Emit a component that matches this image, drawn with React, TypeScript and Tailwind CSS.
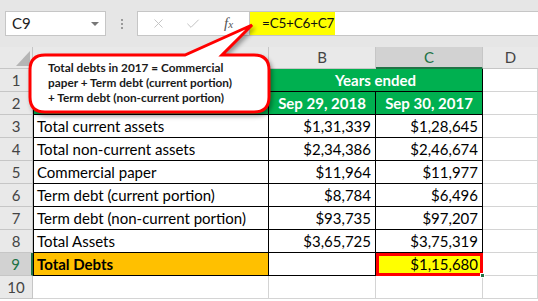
import { Check, X } from "lucide-react";

type Row = {
  n: number;
  label: string;
  b: string;
  c: string;
};

const rows: Row[] = [
  { n: 3, label: "Total current assets", b: "$1,31,339", c: "$1,28,645" },
  { n: 4, label: "Total non-current assets", b: "$2,34,386", c: "$2,46,674" },
  { n: 5, label: "Commercial paper", b: "$11,964", c: "$11,977" },
  { n: 6, label: "Term debt (current portion)", b: "$8,784", c: "$6,496" },
  { n: 7, label: "Term debt (non-current portion)", b: "$93,735", c: "$97,207" },
  { n: 8, label: "Total Assets", b: "$3,65,725", c: "$3,75,319" },
];

const rowHead = "flex items-center justify-center bg-[#e9e9e9] border-r border-b border-[#c6c6c6] text-[#444]";
const cell = "border-r border-b border-black flex items-center";
const grid = "border-r border-b border-[#d4d4d4]";

function FormulaBar() {
  return (
    <div className="h-[47px] bg-[#e6e6e6] pt-[11px]">
      <div className="flex h-[25px] items-stretch">
        <div className="ml-[5px] w-[101px] bg-white border border-[#c6c6c6] flex items-center justify-between pl-[6px] pr-[6px]">
          <span className="text-[15px] text-[#222]">C9</span>
          <span className="w-0 h-0 border-l-[4px] border-r-[4px] border-t-[4px] border-l-transparent border-r-transparent border-t-[#777]" />
        </div>
        <div className="w-[31px] flex flex-col items-center justify-center gap-[2px]">
          <span className="w-[2px] h-[2px] bg-[#9a9a9a]" />
          <span className="w-[2px] h-[2px] bg-[#9a9a9a]" />
          <span className="w-[2px] h-[2px] bg-[#9a9a9a]" />
        </div>
        <div className="w-[113px] bg-white border border-[#c6c6c6] flex items-center pl-[13px] gap-[19px]">
          <X size={15} strokeWidth={1.5} className="text-[#c2c2c2]" />
          <Check size={16} strokeWidth={1.5} className="text-[#c2c2c2]" />
          <span className="font-['Liberation_Serif',serif] italic text-[15px] text-[#555] ml-[4px]">
            f<span className="text-[11px]">x</span>
          </span>
        </div>
        <div className="flex-1 bg-white border-y border-[#c6c6c6] flex items-stretch">
          <div className="w-[85px] bg-[#ffff00] flex items-center pl-[12px] text-[13.5px] tracking-[-0.2px] text-[#111]">
            =C5+C6+C7
          </div>
        </div>
      </div>
    </div>
  );
}

function Callout() {
  return (
    <>
      <svg
        width={538}
        height={301}
        className="absolute left-0 top-0 pointer-events-none drop-shadow-[2px_3px_2px_rgba(0,0,0,0.35)]"
      >
        <path
          d="M45 55 L185 55 L252 25 L222 55 L254 55 Q269 55 269 70 L269 97 Q269 112 254 112 L45 112 Q30 112 30 97 L30 70 Q30 55 45 55 Z"
          fill="#ffffff"
          stroke="#ff0000"
          strokeWidth={3}
          strokeLinejoin="miter"
        />
      </svg>
      <div className="absolute left-[48px] top-[60px] text-[11.8px] leading-[15px] font-bold text-[#1a1a1a] whitespace-nowrap">
        <div>Total debts in 2017 = Commercial</div>
        <div>paper + Term debt (current portion)</div>
        <div>+ Term debt (non-current portion)</div>
      </div>
    </>
  );
}

export default function App() {
  return (
    <div className="relative w-[538px] h-[301px] overflow-hidden bg-white font-['Lato',sans-serif]">
      <FormulaBar />
      <div className="grid grid-cols-[33px_236px_107px_107px_1fr] grid-rows-[22px_repeat(10,23px)] text-[15px]">
        {/* column headers */}
        <div className="relative bg-[#e9e9e9] border-r border-b border-[#c6c6c6]">
          <svg width={14} height={15} className="absolute right-[2px] bottom-[2px]">
            <path d="M14 0 L14 15 L0 15 Z" fill="#b5b5b5" />
          </svg>
        </div>
        <div className="bg-[#e9e9e9] border-r border-b border-[#c6c6c6]" />
        <div className="bg-[#e9e9e9] border-r border-b border-[#c6c6c6] flex items-center justify-center text-[#444]">B</div>
        <div className="bg-[#d2d2d2] border-r border-[#c6c6c6] border-b-2 border-b-[#217346] flex items-center justify-center text-[#217346]">C</div>
        <div className="bg-[#e9e9e9] border-b border-[#c6c6c6] flex items-center justify-center text-[#444]">D</div>

        {/* row 1 */}
        <div className={rowHead}>1</div>
        <div className="row-span-2 bg-[#00b050] border-l border-r border-b border-black" />
        <div className="col-span-2 bg-[#00b050] border-r border-b border-black flex items-center justify-center text-white font-bold">
          Years ended
        </div>
        <div className={grid} />

        {/* row 2 */}
        <div className={rowHead}>2</div>
        <div className="bg-[#00b050] border-r border-b border-black flex items-center justify-center text-white font-bold">
          Sep 29, 2018
        </div>
        <div className="bg-[#00b050] border-r border-b border-black flex items-center justify-center text-white font-bold">
          Sep 30, 2017
        </div>
        <div className={grid} />

        {rows.map((r) => (
          <div key={r.n} className="contents">
            <div className={rowHead}>{r.n}</div>
            <div className={`${cell} border-l pl-[3px] text-black`}>{r.label}</div>
            <div className={`${cell} justify-end pr-[4px] text-black`}>{r.b}</div>
            <div className={`${cell} justify-end pr-[4px] text-black`}>{r.c}</div>
            <div className={grid} />
          </div>
        ))}

        {/* row 9 */}
        <div className="flex items-center justify-center bg-[#d2d2d2] border-b border-[#c6c6c6] border-r-2 border-r-[#217346] text-[#217346]">
          9
        </div>
        <div className={`${cell} border-l bg-[#ffc000] pl-[3px] font-bold text-black`}>Total Debts</div>
        <div className={cell} />
        <div className="relative bg-[#ffff00] border-[3px] border-[#ff0000] flex items-center justify-end pr-[2px] text-black">
          $1,15,680
          <span className="absolute -right-[5px] -bottom-[5px] w-[5px] h-[5px] bg-[#217346] border border-white" />
        </div>
        <div className={grid} />

        {/* row 10 */}
        <div className={rowHead}>10</div>
        <div className={grid} />
        <div className={grid} />
        <div className={grid} />
        <div className={grid} />
      </div>
      <Callout />
    </div>
  );
}
